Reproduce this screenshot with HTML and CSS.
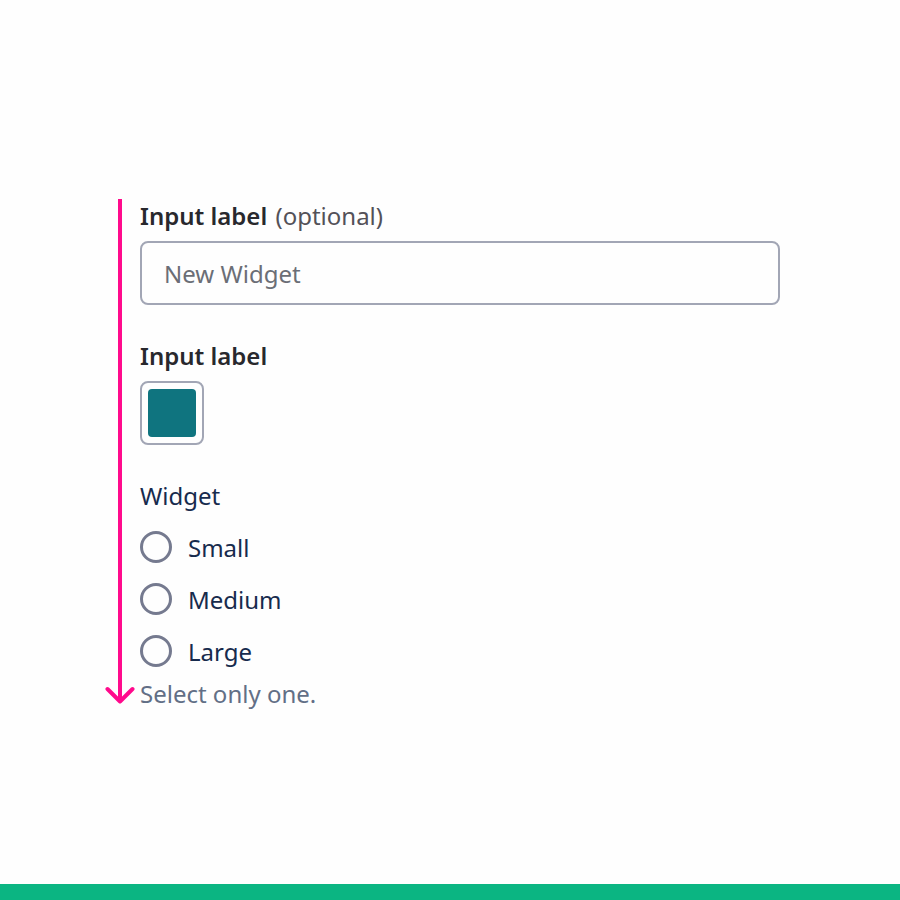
FILE: index.html
```html
<!DOCTYPE html>
<html lang="en">
<head>
  <meta charset="UTF-8">
  <meta name="viewport" content="width=device-width, initial-scale=1">
  <title>Form layout</title>
  <link rel="stylesheet" href="styles.css">
</head>

<body>
  <main class="example">
    <!-- Reading direction arrow -->
    <div class="flow-arrow" aria-hidden="true">
      <div class="flow-line"></div>
      <svg class="flow-head" width="30" height="18" viewBox="0 0 30 18">
        <path d="M15 0V15.5M2.5 3L15 15.5L27.5 3" fill="none" stroke="#ff0a8c" stroke-width="4" stroke-linecap="round" stroke-linejoin="round"/>
      </svg>
    </div>

    <form class="form">
      <div class="field">
        <label class="label" for="name">Input label <span class="optional">(optional)</span></label>
        <input class="text-input" type="text" id="name" placeholder="New Widget">
      </div>

      <div class="field">
        <label class="label" for="color">Input label</label>
        <input class="color-input" type="color" id="color" value="#0f747f">
      </div>

      <fieldset class="radio-group" aria-describedby="size-hint">
        <legend class="legend">Widget</legend>
        <div class="radio-list">
          <label class="radio" for="small"><input type="radio" name="size" id="small"><span>Small</span></label>
          <label class="radio" for="medium"><input type="radio" name="size" id="medium"><span>Medium</span></label>
          <label class="radio" for="large"><input type="radio" name="size" id="large"><span>Large</span></label>
        </div>
        <p class="hint" id="size-hint">Select only one.</p>
      </fieldset>
    </form>
  </main>

  <footer class="status-bar"></footer>
</body>
</html>
```

FILE: styles.css
```css
* {
  box-sizing: border-box;
}

body {
  margin: 0;
  min-height: 100vh;
  display: flex;
  flex-direction: column;
  background: #fefefe;
  color: #172b4d;
  font-family: "Noto Sans", sans-serif;
  font-size: 24px;
  line-height: 32px;
}

.example {
  display: flex;
  gap: 5px;
  padding: 199px 120px 40px 105px;
}

.flow-arrow {
  display: flex;
  flex-direction: column;
  align-items: center;
  width: 30px;
  padding-bottom: 6px;
}

.flow-line {
  flex: 1;
  width: 4px;
  background: #ff0a8c;
}

.flow-head {
  display: block;
}

.form {
  flex: 1;
  display: flex;
  flex-direction: column;
  gap: 35px;
  padding-top: 1px;
}

.field {
  display: flex;
  flex-direction: column;
  align-items: flex-start;
  gap: 9px;
}

.label {
  color: #28282d;
  font-weight: 600;
}

.optional {
  margin-left: 2px;
  color: #535158;
  font-weight: 400;
}

.text-input {
  width: 100%;
  height: 64px;
  padding: 0 22px;
  border: 2px solid #a2a6b5;
  border-radius: 8px;
  background: #fefefe;
  color: #172b4d;
  font: inherit;
}

.text-input::placeholder {
  color: #6b6e76;
  opacity: 1;
}

.color-input {
  appearance: none;
  width: 64px;
  height: 64px;
  padding: 6px;
  border: 2px solid #a2a6b5;
  border-radius: 8px;
  background: #fefefe;
  cursor: pointer;
}

.color-input::-webkit-color-swatch-wrapper {
  padding: 0;
}

.color-input::-webkit-color-swatch {
  border: none;
  border-radius: 4px;
}

.radio-group {
  min-width: 0;
  margin: 0;
  padding: 0;
  border: none;
}

.legend {
  padding: 0;
}

.radio-list {
  display: flex;
  flex-direction: column;
  align-items: flex-start;
  gap: 18px;
  margin-top: 19px;
  line-height: 34px;
}

.radio {
  display: flex;
  align-items: flex-start;
  gap: 16px;
}

.radio input {
  appearance: none;
  width: 32px;
  height: 32px;
  margin: 0;
  border: 3px solid #757a8f;
  border-radius: 50%;
}

.radio input:checked {
  background: #757a8f;
  box-shadow: inset 0 0 0 5px #fefefe;
}

.hint {
  margin: 9px 0 0;
  color: #626f86;
}

.status-bar {
  height: 16px;
  margin-top: auto;
  background: #0bb582;
}
```
